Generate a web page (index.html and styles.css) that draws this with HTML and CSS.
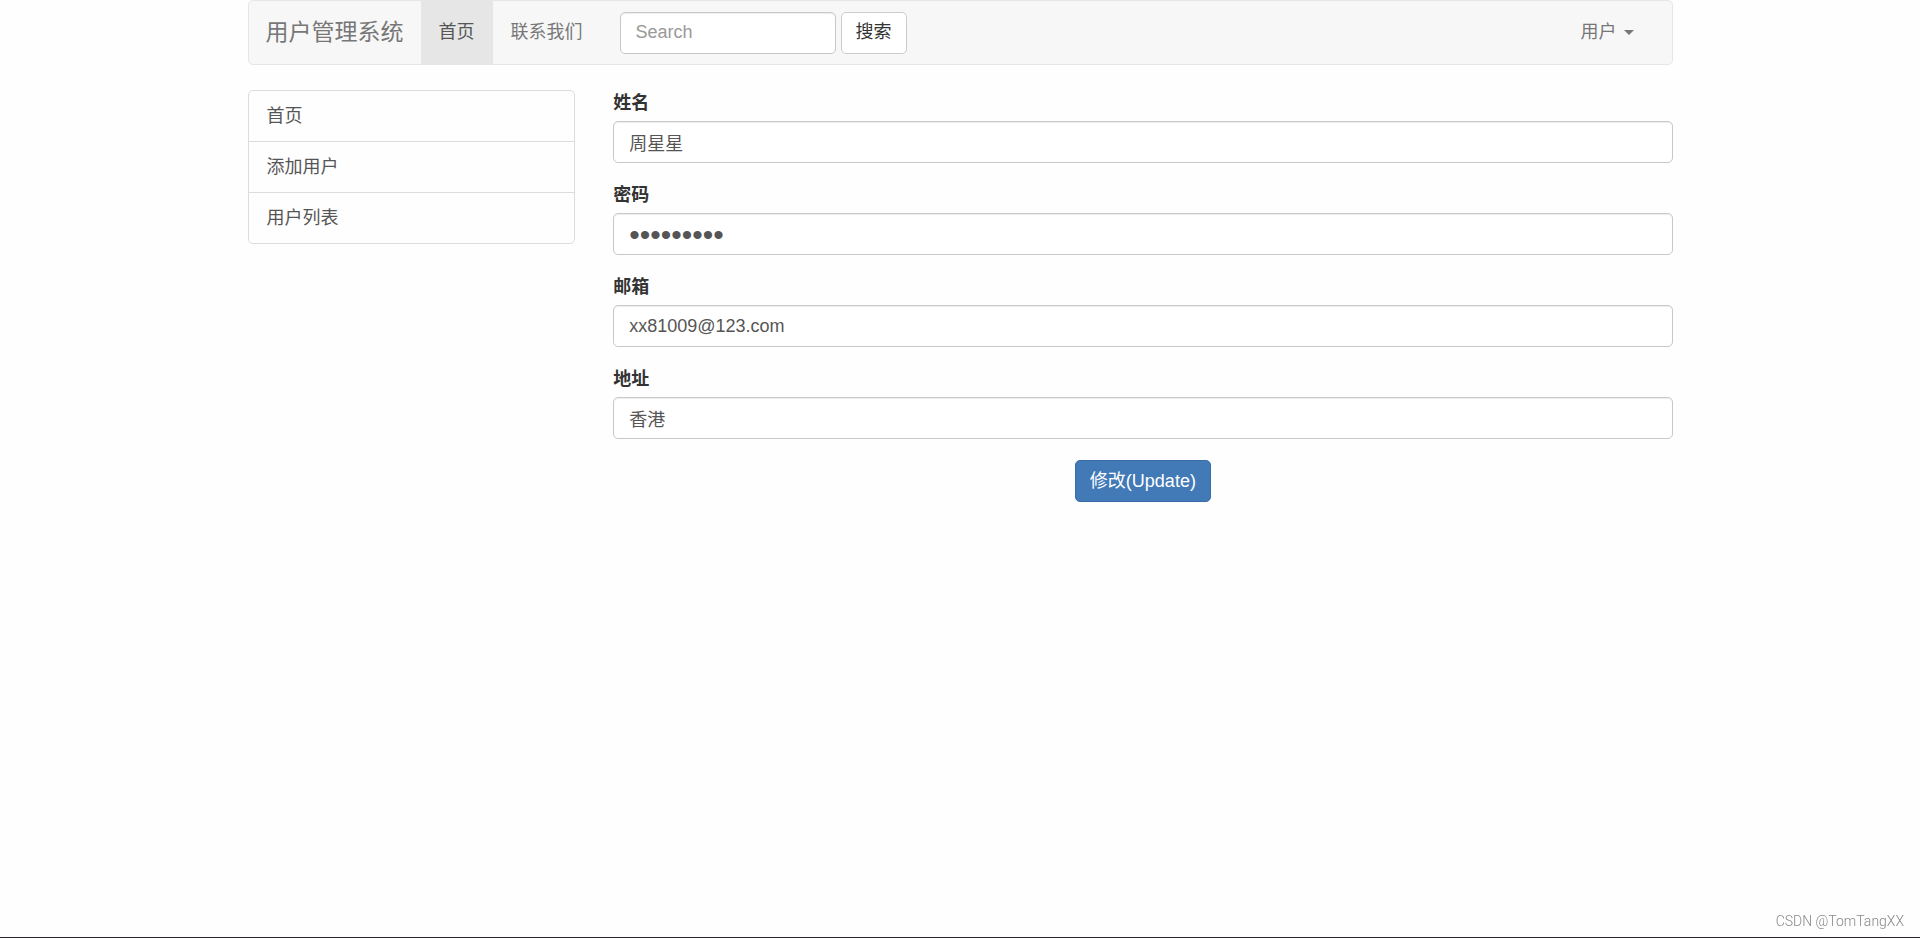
FILE: index.html
```html
<!DOCTYPE html>
<html lang="zh-CN">

<head>
    <meta charset="UTF-8">
    <meta name="viewport" content="width=device-width, initial-scale=1.0">
    <title>用户管理系统</title>
    <link rel="stylesheet" href="styles.css">
</head>

<body>
    <div class="container">
        <nav class="navbar">
            <a class="navbar-brand" href="#">用户管理系统</a>
            <ul class="navbar-nav">
                <li class="active"><a href="#">首页</a></li>
                <li><a href="#">联系我们</a></li>
            </ul>
            <form class="navbar-form">
                <input type="text" class="form-control" placeholder="Search" aria-label="Search">
                <button type="submit" class="btn btn-default">搜索</button>
            </form>
            <ul class="navbar-nav navbar-right">
                <li><a href="#">用户<span class="caret"></span></a></li>
            </ul>
        </nav>

        <div class="row">
            <div class="list-group">
                <a href="#" class="list-group-item">首页</a>
                <a href="#" class="list-group-item">添加用户</a>
                <a href="#" class="list-group-item">用户列表</a>
            </div>

            <form class="user-form">
                <div class="form-group">
                    <label for="name">姓名</label>
                    <input type="text" class="form-control" id="name" value="周星星">
                </div>
                <div class="form-group">
                    <label for="password">密码</label>
                    <input type="password" class="form-control" id="password" value="123456789">
                </div>
                <div class="form-group">
                    <label for="email">邮箱</label>
                    <input type="email" class="form-control" id="email" value="xx81009@123.com">
                </div>
                <div class="form-group">
                    <label for="address">地址</label>
                    <input type="text" class="form-control" id="address" value="香港">
                </div>
                <div class="form-actions">
                    <button type="submit" class="btn btn-primary">修改(Update)</button>
                </div>
            </form>
        </div>
    </div>

    <div class="watermark">CSDN @TomTangXX</div>
</body>

</html>
```
FILE: styles.css
```css
* {
    box-sizing: border-box;
}

body {
    margin: 0;
    min-height: 100vh;
    border-bottom: 1px solid #26232a;
    background-color: #fefefe;
    color: #333;
    font-family: "Liberation Sans", "Noto Sans CJK SC", sans-serif;
    font-size: 18px;
    line-height: 25px;
}

a {
    text-decoration: none;
}

.container {
    max-width: 1425px;
    margin: 0 auto;
}

/* Navbar */
.navbar {
    display: flex;
    align-items: center;
    min-height: 65px;
    margin-bottom: 25px;
    background-color: #f7f7f7;
    border: 1px solid #e6e6e6;
    border-radius: 5px;
}

.navbar-brand {
    padding: 19px 17px;
    color: #777;
    font-size: 23px;
}

.navbar-nav {
    display: flex;
    margin: 0;
    padding: 0;
    list-style: none;
}

.navbar-nav a {
    display: flex;
    align-items: center;
    padding: 19px 18px;
    color: #777;
}

.navbar-nav .active a {
    background-color: #e6e6e6;
    color: #555;
}

.navbar-form {
    display: flex;
    gap: 5px;
    margin-left: 19px;
}

.navbar-form .form-control {
    width: 216px;
}

.navbar-right {
    margin-left: auto;
    margin-right: 20px;
}

.caret {
    margin-left: 7px;
    border-top: 5px solid;
    border-left: 5px solid transparent;
    border-right: 5px solid transparent;
}

/* Form controls */
.form-control {
    display: block;
    width: 100%;
    height: 42px;
    padding: 7px 15px;
    background-color: #fff;
    border: 1px solid #c8c8c8;
    border-radius: 5px;
    box-shadow: inset 0 1px 1px rgba(0, 0, 0, 0.075);
    color: #555;
    font: inherit;
}

.form-control::placeholder {
    color: #999;
    opacity: 1;
}

/* Bigger masking dots */
.form-control[type="password"] {
    padding-top: 6px;
    padding-bottom: 4px;
    font-size: 30px;
}

.btn {
    height: 42px;
    padding: 7px 14px;
    border: 1px solid transparent;
    border-radius: 5px;
    font: inherit;
    cursor: pointer;
}

.btn-default {
    background-color: #fff;
    border-color: #ccc;
    color: #333;
}

.btn-primary {
    background-color: #4279b7;
    border-color: #3a6da5;
    color: #fff;
}

/* Content */
.row {
    display: flex;
    align-items: flex-start;
    gap: 38px;
}

.list-group {
    flex: 0 0 23%;
    border: 1px solid #dcdcdc;
    border-radius: 5px;
}

.list-group-item {
    display: block;
    padding: 13px 18px 12px;
    color: #555;
}

.list-group-item + .list-group-item {
    border-top: 1px solid #dcdcdc;
}

.user-form {
    flex: 1;
}

.form-group {
    margin-bottom: 19px;
}

.form-group label {
    display: block;
    margin-bottom: 4px;
    font-weight: bold;
    line-height: 27px;
}

.form-actions {
    margin-top: 21px;
    text-align: center;
}

.watermark {
    position: fixed;
    right: 16px;
    bottom: 8px;
    color: #888;
    font-family: Roboto, sans-serif;
    font-size: 14px;
    font-weight: 300;
    line-height: 18px;
}
```
